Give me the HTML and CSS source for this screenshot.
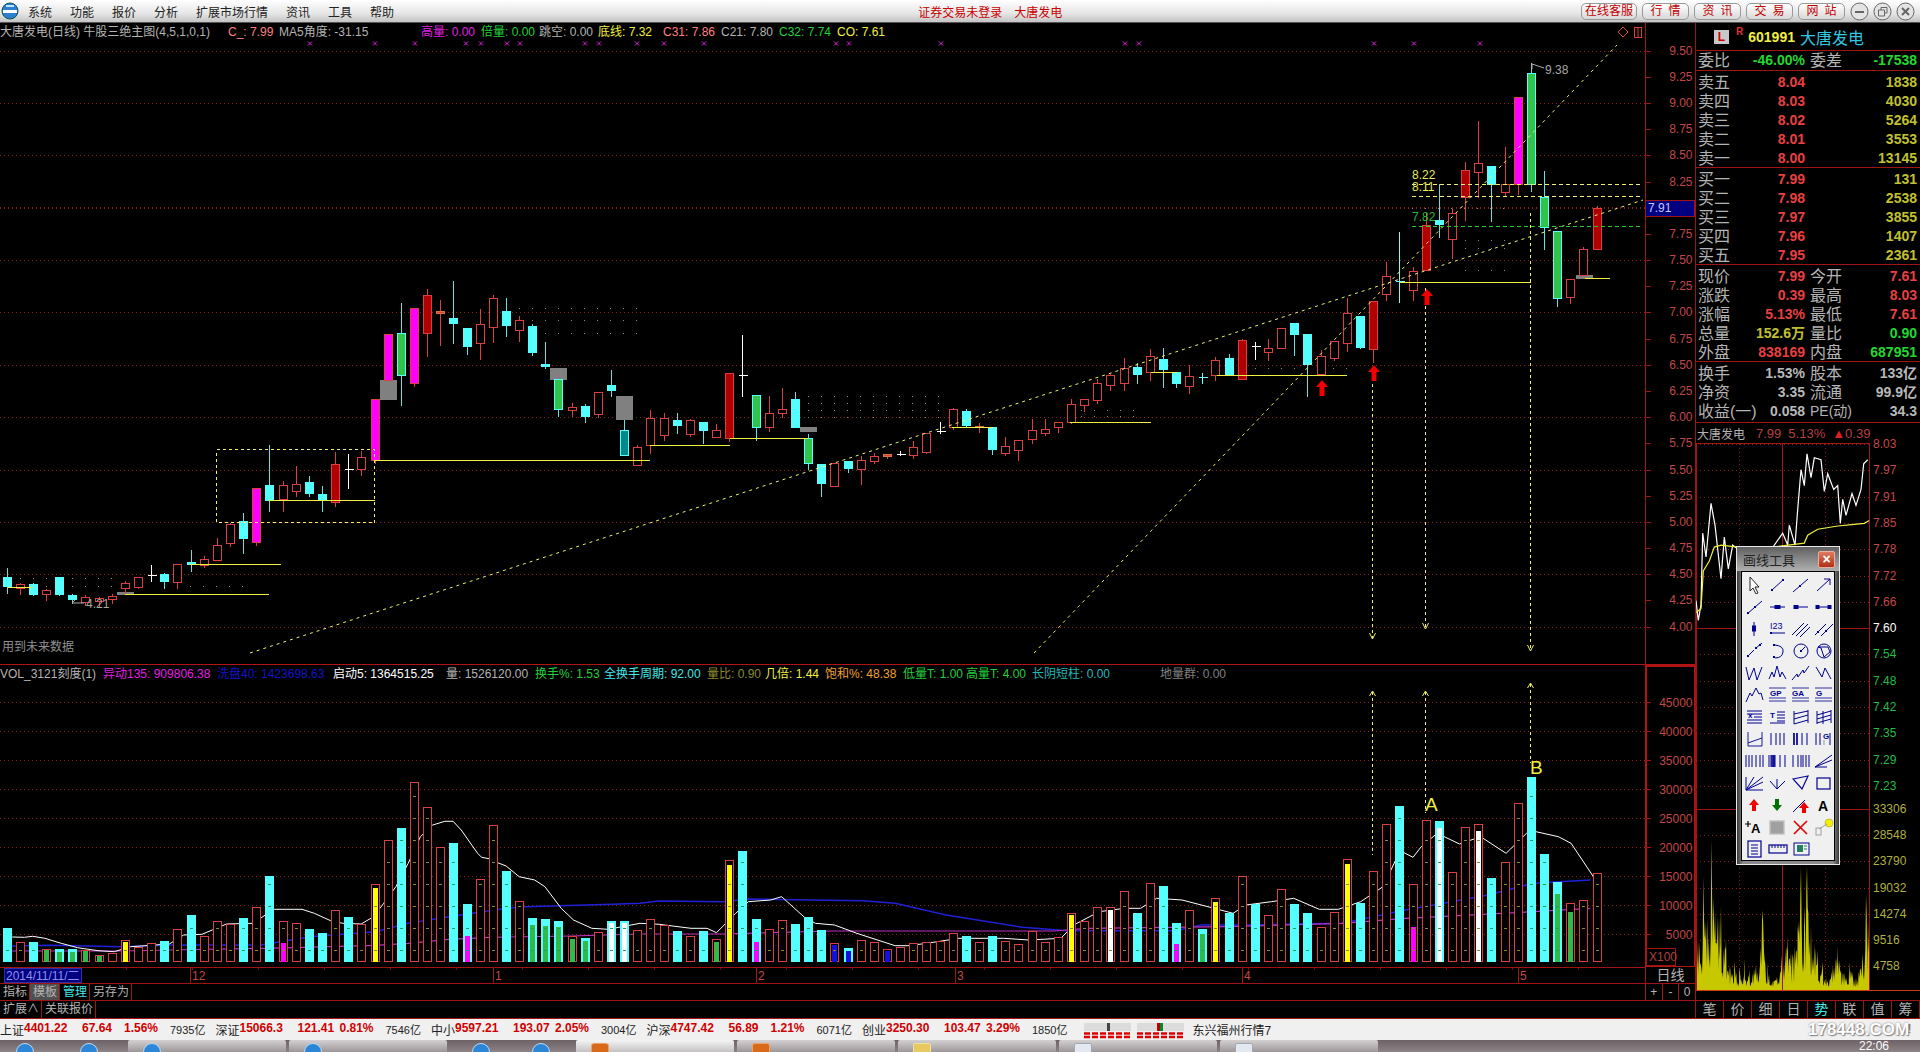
FILE: index.html
```html
<!DOCTYPE html>
<html lang="zh-CN">
<head>
  <meta charset="UTF-8">
  <title>大唐发电 601991</title>
  <link rel="stylesheet" href="styles.css">
</head>
<body>
<div class="app">
  <header class="titlebar">
    <svg class="orb" width="18" height="18" viewBox="0 0 18 18"><circle cx="9" cy="9" r="8" fill="#2f7fd0" stroke="#155" /><path d="M2 8h14v3H2z" fill="#fff"/><path d="M5 4h8" stroke="#bfe3ff" stroke-width="2"/></svg>
    <nav class="menu">
      <span>系统</span><span>功能</span><span>报价</span><span>分析</span><span>扩展市场行情</span><span>资讯</span><span>工具</span><span>帮助</span>
    </nav>
    <div class="login"><span>证券交易未登录</span><span>大唐发电</span></div>
    <div class="pills">
      <span class="pill pill-wide">在线客服</span>
      <span class="pill">行情</span>
      <span class="pill">资讯</span>
      <span class="pill">交易</span>
      <span class="pill">网站</span>
    </div>
    <div class="winbtns">
      <svg width="19" height="19" viewBox="0 0 19 19"><circle cx="9.5" cy="9.5" r="8.5"/><path d="M5 10h9" stroke-width="2"/></svg>
      <svg width="19" height="19" viewBox="0 0 19 19"><circle cx="9.5" cy="9.5" r="8.5"/><path d="M5.5 8h6v6h-6zM8 8V5.5h6V11h-2.500"/></svg>
      <svg width="19" height="19" viewBox="0 0 19 19"><circle cx="9.5" cy="9.5" r="8.5"/><path d="M6 6l7 7M13 6l-7 7" stroke-width="2"/></svg>
    </div>
  </header>

  <div class="workspace">
    <div class="charts">
      <section class="price-pane">
        <div class="legend price-legend">
          <span class="gray">大唐发电(日线) 牛股三绝主图(4,5,1,0,1)</span>
          <span class="pink">C_: 7.99</span>
          <span class="gray">MA5角度: -31.15</span>
          <span class="magenta">高量: 0.00</span>
          <span class="green">倍量: 0.00</span>
          <span class="gray">跳空: 0.00</span>
          <span class="yellow">底线: 7.32</span>
          <span class="pink">C31: 7.86</span>
          <span class="gray">C21: 7.80</span>
          <span class="green">C32: 7.74</span>
          <span class="yellow">CO: 7.61</span>
        </div>
        <div class="future-note">用到未来数据</div>
        <svg id="priceChart" class="chart" width="1695" height="642" viewBox="0 23 1695 642"></svg>
      </section>

      <section class="vol-pane">
        <div class="legend vol-legend">
          <span class="gray">VOL_3121刻度(1)</span>
          <span class="magenta">异动135: 909806.38</span>
          <span class="blue">洗盘40: 1423698.63</span>
          <span class="white">启动5: 1364515.25</span>
          <span class="gray">量: 1526120.00</span>
          <span class="green">换手%: 1.53</span>
          <span class="cyan">全换手周期: 92.00</span>
          <span class="olive">量比: 0.90</span>
          <span class="yellow">几倍: 1.44</span>
          <span class="orange">饱和%: 48.38</span>
          <span class="green">低量T: 1.00</span>
          <span class="green">高量T: 4.00</span>
          <span class="teal">长阴短柱: 0.00</span>
          <span class="dim">地量群: 0.00</span>
        </div>
        <svg id="volChart" class="chart" width="1695" height="302" viewBox="0 665 1695 302"></svg>
      </section>

      <div class="date-row">
        <svg id="dateAxis" width="1645" height="16" viewBox="0 967 1645 16"></svg>
        <div class="period">日线</div>
      </div>
      <div class="tool-row">
        <div class="tabs-left">
          <span>指标</span><span class="on">模板</span><span class="cyan">管理</span><span>另存为</span>
        </div>
        <div class="zoom-btns"><span>+</span><span>-</span><span>0</span></div>
      </div>
      <div class="ext-row">
        <div class="tabs-left">
          <span>扩展∧</span><span>关联报价</span>
        </div>
      </div>
    </div>

    <aside class="side">
      <div class="stock-head">
        <span class="badge-l">L</span><span class="badge-r">R</span>
        <span class="code">601991</span><span class="stock-name">大唐发电</span>
      </div>
      <div class="quote q-ratio">
        <span>委比</span><b class="up-g">-46.00%</b><span class="lbl2">委差</span><b class="up-g">-17538</b>
      </div>
      <div class="quote q-five">
        <span>卖五</span><b class="red">8.04</b><i></i><b class="oli">1838</b>
        <span>卖四</span><b class="red">8.03</b><i></i><b class="oli">4030</b>
        <span>卖三</span><b class="red">8.02</b><i></i><b class="oli">5264</b>
        <span>卖二</span><b class="red">8.01</b><i></i><b class="oli">3553</b>
        <span>卖一</span><b class="red">8.00</b><i></i><b class="oli">13145</b>
      </div>
      <div class="quote q-five">
        <span>买一</span><b class="red">7.99</b><i></i><b class="oli">131</b>
        <span>买二</span><b class="red">7.98</b><i></i><b class="oli">2538</b>
        <span>买三</span><b class="red">7.97</b><i></i><b class="oli">3855</b>
        <span>买四</span><b class="red">7.96</b><i></i><b class="oli">1407</b>
        <span>买五</span><b class="red">7.95</b><i></i><b class="oli">2361</b>
      </div>
      <div class="quote q-five">
        <span>现价</span><b class="red">7.99</b><span class="lbl2">今开</span><b class="red">7.61</b>
        <span>涨跌</span><b class="red">0.39</b><span class="lbl2">最高</span><b class="red">8.03</b>
        <span>涨幅</span><b class="red">5.13%</b><span class="lbl2">最低</span><b class="red">7.61</b>
        <span>总量</span><b class="oli">152.6万</b><span class="lbl2">量比</span><b class="up-g">0.90</b>
        <span>外盘</span><b class="red">838169</b><span class="lbl2">内盘</span><b class="up-g">687951</b>
      </div>
      <div class="quote q-fin">
        <span>换手</span><b class="sil">1.53%</b><span class="lbl2">股本</span><b class="sil">133亿</b>
        <span>净资</span><b class="sil">3.35</b><span class="lbl2">流通</span><b class="sil">99.9亿</b>
        <span>收益(一)</span><b class="sil">0.058</b><span class="lbl2 pe">PE(动)</span><b class="sil">34.3</b>
      </div>
      <div class="mini-head">
        <span class="mini-name">大唐发电</span><span>7.99</span><span>5.13%</span><span><em>▲</em>0.39</span>
      </div>
      <svg id="miniChart" class="chart mini" width="225" height="577" viewBox="1695 423 225 577"></svg>
      <div class="side-tabs">
        <span>笔</span><span>价</span><span>细</span><span>日</span><span class="cyan">势</span><span>联</span><span>值</span><span>筹</span>
      </div>
    </aside>
  </div>

  <footer class="statusbar">
    <div class="market"><span>上证</span><b>4401.22</b><b>67.64</b><b>1.56%</b><span class="amt">7935亿</span></div>
    <div class="market"><span>深证</span><b>15066.3</b><b>121.41</b><b>0.81%</b><span class="amt">7546亿</span></div>
    <div class="market"><span>中小</span><b>9597.21</b><b>193.07</b><b>2.05%</b><span class="amt">3004亿</span></div>
    <div class="market"><span>沪深</span><b>4747.42</b><b>56.89</b><b>1.21%</b><span class="amt">6071亿</span></div>
    <div class="market"><span>创业</span><b>3250.30</b><b>103.47</b><b>3.29%</b><span class="amt">1850亿</span></div>
    <svg class="breadth" width="104" height="18" viewBox="0 0 104 18">
      <path d="M1 2h47v8H1zM54 2h47v8H54z" fill="#dcdcdc"/>
      <path d="M24 2h3v8h-3z" fill="#444"/><path d="M74 2h3v8h-3z" fill="#b00"/><path d="M77 2h3v8h-3z" fill="#083"/>
      <path d="M1 12.500h47M54 12.500h47M1 16h47M54 16h47" stroke="#d00" stroke-width="2.500" stroke-dasharray="6 2"/>
    </svg>
    <span class="news">东兴福州行情7</span>
    <span class="watermark">178448.COM</span>
    <span class="tray-hint">!</span>
  </footer>

  <div class="taskbar">
    <i class="orb-start"></i><i class="tb-ie"></i>
    <span class="tb-btn"><i></i></span>
    <span class="tb-btn"><i></i></span>
    <span class="tb-quick"><i></i><i></i></span>
    <span class="tb-btn tb-lit"><i class="org"></i></span>
    <span class="tb-btn"><i class="org"></i></span>
    <span class="tb-btn"><i class="fold"></i></span>
    <span class="tb-btn"><i class="pale"></i></span>
    <span class="tb-btn"><i class="pale"></i></span>
    <span class="clock">22:06</span>
  </div>

  <div class="draw-tools">
    <div class="draw-title"><span>画线工具</span><b class="draw-close">×</b></div>
    <div id="toolGrid" class="draw-grid"></div>
  </div>
</div>
<script src="chart.js"></script>
</body>
</html>
```

FILE: styles.css
```css
* {
  box-sizing: border-box;
}
html, body {
  margin: 0;
  height: 100%;
  overflow: hidden;
  background: #000;
}
body {
  font-family: "Liberation Sans", "Noto Sans CJK SC", sans-serif;
  font-size: 12px;
  color: #b4b4b4;
}
.app {
  position: relative;
  width: 1920px;
  height: 1052px;
  display: flex;
  flex-direction: column;
  overflow: hidden;
}

/* title bar */
.titlebar {
  height: 23px;
  flex: none;
  display: flex;
  align-items: center;
  background: linear-gradient(#ffffff, #e6e6e6 60%, #c4c4c4);
  border-bottom: 1px solid #555;
  color: #222;
}
.orb {
  margin-left: 1px;
  flex: none;
}
.menu {
  display: flex;
  gap: 18px;
  margin-left: 9px;
}
.login {
  display: flex;
  gap: 12px;
  margin-left: 524px;
  color: #c80000;
}
.pills {
  display: flex;
  gap: 5px;
  margin-left: auto;
}
.pill {
  width: 47px;
  height: 17px;
  line-height: 15px;
  text-align: center;
  letter-spacing: 6px;
  padding-left: 6px;
  color: #c00000;
  border: 1px solid #999;
  border-radius: 5px;
  background: linear-gradient(#fff, #d8d8d8);
}
.pill-wide {
  width: 56px;
  letter-spacing: 0;
  padding-left: 0;
}
.winbtns {
  display: flex;
  gap: 4px;
  margin: 0 5px 0 5px;
}
.winbtns svg {
  fill: none;
  stroke: #666;
}
.winbtns circle {
  fill: #e4e4e4;
}

/* main layout */
.workspace {
  flex: 1;
  display: flex;
  min-height: 0;
}
.charts {
  width: 1695px;
  flex: none;
  display: flex;
  flex-direction: column;
}
.side {
  flex: 1;
  display: flex;
  flex-direction: column;
  border-left: 1px solid #a01414;
}
.price-pane, .vol-pane {
  position: relative;
  flex: none;
}
.price-pane {
  height: 642px;
}
.vol-pane {
  height: 302px;
}
.chart {
  display: block;
}
.chart text {
  font-family: "Liberation Sans", "Noto Sans CJK SC", sans-serif;
  font-size: 12px;
}
.legend {
  position: absolute;
  left: 0;
  top: 1px;
  display: grid;
  white-space: nowrap;
  line-height: 17px;
}
.price-legend {
  grid-template-columns: 228px 51px 142px 60px 58px 59px 65px 58px 58px 58px auto;
}
.vol-legend {
  grid-template-columns: 103px 114px 116px 113px 89px 69px 103px 58px 60px 78px 63px 66px 128px auto;
}
.gray { color: #b4b4b4; }
.dim { color: #808080; }
.white { color: #fff; }
.pink { color: #ff8080; }
.magenta { color: #e020e0; }
.green { color: #22d03c; }
.yellow { color: #f0f040; }
.olive { color: #8c8c30; }
.orange { color: #f0a030; }
.cyan { color: #40e8e8; }
.teal { color: #20b8b8; }
.blue { color: #1414c8; }
.future-note {
  position: absolute;
  left: 2px;
  top: 614px;
  color: #909090;
}

/* rows under the charts */
.date-row {
  height: 16px;
  flex: none;
  display: flex;
  border-top: 0;
}
.period {
  width: 50px;
  text-align: center;
  font-size: 14px;
  line-height: 16px;
  border-left: 1px solid #a01414;
}
.tool-row, .ext-row {
  flex: none;
  display: flex;
  justify-content: space-between;
  border-top: 1px solid #a01414;
}
.tool-row {
  height: 17px;
}
.ext-row {
  height: 19px;
  border-bottom: 1px solid #a01414;
}
.tabs-left {
  display: flex;
  line-height: 16px;
}
.tabs-left span {
  padding: 0 2px 0 3px;
  border-right: 1px solid #a01414;
}
.tabs-left .on {
  background: #505050;
}
.zoom-btns {
  width: 50px;
  display: flex;
  border-left: 1px solid #a01414;
}
.zoom-btns span {
  flex: 1;
  text-align: center;
  line-height: 16px;
  border-right: 1px solid #a01414;
}
.zoom-btns span:last-child {
  border-right: 0;
}

/* quote panel */
.stock-head {
  height: 28px;
  flex: none;
  display: flex;
  align-items: center;
  border-bottom: 1px solid #a01414;
  padding-left: 18px;
}
.badge-l {
  width: 15px;
  height: 14px;
  line-height: 14px;
  text-align: center;
  font-weight: bold;
  color: #d00000;
  background: #c8c8c8;
}
.badge-r {
  margin: -10px 0 0 7px;
  font-size: 10px;
  font-weight: bold;
  color: #e03030;
}
.code {
  margin-left: 5px;
  font-size: 14px;
  font-weight: bold;
  color: #f0f040;
}
.stock-name {
  margin-left: 5px;
  font-size: 16px;
  color: #30c8e0;
}
.quote {
  flex: none;
  display: grid;
  grid-template-columns: 45px 62px 45px 67px;
  grid-auto-rows: 19px;
  padding-left: 2px;
  border-bottom: 1px solid #a01414;
  align-items: center;
  font-size: 16px;
  white-space: nowrap;
}
.quote b, .quote span {
  line-height: 19px;
}
.quote b {
  font-size: 14px;
  text-align: right;
}
.quote i {
  display: block;
}
.q-ratio {
  height: 20px;
}
.q-five {
  height: 97px;
  padding-top: 2px;
}
.q-fin {
  height: 61px;
  padding-top: 2px;
}
.lbl2 {
  padding-left: 5px;
}
.pe {
  font-size: 14px;
}
.red { color: #e84040; }
.oli { color: #c0c030; }
.up-g { color: #20d830; }
.sil { color: #b8b8b8; }
.mini-head {
  position: relative;
  z-index: 1;
  height: 20px;
  margin-bottom: -20px;
  flex: none;
  display: flex;
  align-items: center;
  gap: 7px;
  color: #b84040;
  font-size: 13px;
  padding-left: 1px;
}
.mini-name {
  color: #b4b4b4;
  font-size: 12px;
  margin-right: 4px;
}
.mini-head em {
  font-style: normal;
  color: #e02020;
}
.mini {
  flex: none;
}
.side-tabs {
  height: 19px;
  flex: none;
  display: flex;
  border-top: 1px solid #a01414;
  border-bottom: 1px solid #a01414;
}
.side-tabs span {
  width: 28px;
  text-align: center;
  font-size: 14px;
  line-height: 17px;
  border-right: 1px solid #a01414;
}

/* status + taskbar */
.statusbar {
  position: relative;
  height: 21px;
  flex: none;
  display: flex;
  align-items: center;
  background: #f0f0f0;
  color: #222;
}
.market {
  width: 215.500px;
  flex: none;
  display: grid;
  grid-template-columns: 24px 58px 42px 46px 1fr;
}
.market b {
  color: #d00000;
}
.amt {
  font-size: 11px;
}
.breadth {
  margin-left: 5px;
  flex: none;
}
.news {
  margin-left: 6px;
}
.watermark {
  position: absolute;
  left: 1808px;
  top: 0;
  font-size: 17px;
  line-height: 21px;
  font-weight: bold;
  color: #fff;
  text-shadow: 0 0 2px #777, 1px 1px 1px #888;
}
.tray-hint {
  position: absolute;
  left: 1908px;
  top: 3px;
  color: #666;
}
.taskbar {
  height: 12px;
  flex: none;
  display: flex;
  align-items: flex-start;
  overflow: hidden;
  background: linear-gradient(#6d6366, #8d8285);
}
.taskbar i {
  display: block;
  flex: none;
  width: 18px;
  height: 18px;
  border-radius: 50%;
  background: #2c86d8;
  border: 1px solid #bcdcf4;
}
.orb-start {
  margin: 3px 0 0 16px;
}
.taskbar .tb-ie {
  margin: 3px 30px 0 46px;
}
.tb-btn {
  width: 158px;
  height: 12px;
  flex: none;
  margin-right: 3px;
  padding: 3px 0 0 15px;
  background: linear-gradient(#d4d0d2, #9d9698);
  border-radius: 2px 2px 0 0;
}
.tb-lit {
  background: linear-gradient(#f4f4f4, #c4c2c2);
}
.tb-quick {
  width: 126px;
  flex: none;
  display: flex;
  gap: 42px;
  padding: 3px 0 0 22px;
}
.taskbar .org { background: #d86a1a; border-color: #f0a060; border-radius: 3px; }
.taskbar .fold { background: #e8c860; border-color: #f0e0a0; border-radius: 2px; }
.taskbar .pale { background: #e4e8f0; border-color: #a0a8b8; border-radius: 2px; }
.clock {
  margin-left: 478px;
  color: #fff;
  line-height: 13px;
}

/* floating draw tool window */
.draw-tools {
  position: absolute;
  left: 1736px;
  top: 546px;
  width: 104px;
  height: 319px;
  padding: 0 4px 4px;
  border: 1px solid #e8e8e8;
  background: linear-gradient(90deg, #3a3a3a, #8a8a8a 6%, #8a8a8a 94%, #3a3a3a);
}
.draw-title {
  height: 24px;
  display: flex;
  align-items: center;
  justify-content: space-between;
  color: #222;
  font-size: 13px;
  background: linear-gradient(#606060, #b0b0b0);
  margin: 0 -4px;
  padding: 0 4px 0 6px;
}
.draw-close {
  width: 17px;
  height: 17px;
  line-height: 15px;
  text-align: center;
  color: #fff;
  font-size: 14px;
  border-radius: 2px;
  border: 1px solid #e8b0a0;
  background: linear-gradient(#e07860, #b03018);
}
.draw-grid {
  height: 290px;
  display: grid;
  grid-template-columns: repeat(4, 23px);
  grid-auto-rows: 22px;
  padding: 2px 0 0 1px;
  background: #f0f0f0;
  border: 1px solid #000;
}
.draw-grid svg {
  display: block;
  margin: 2px 0 0 1px;
  fill: none;
  stroke: #000090;
}
.draw-grid text {
  font-family: "Liberation Sans", sans-serif;
  font-weight: bold;
  font-size: 8px;
  fill: #000090;
  stroke: none;
}
```

FILE: chart.js
```js
// coordinates are page pixels, the svg viewBoxes line up with the page
const RED = '#d94040', LINE = '#a01414', CYAN = '#55ffff', DASH = '#f0f070';
const X = i => Math.round(6.6 + 13.14 * i) + 0.5;
const Z = v => Math.round(270 + v / 3) + 0.5;   // first crop scale
const Z2 = v => Math.round(40 + v / 3) + 0.5;   // right end of the chart

const line = (x1, y1, x2, y2, c, extra = '') =>
  `<line x1="${x1}" y1="${y1}" x2="${x2}" y2="${y2}" stroke="${c}" ${extra}/>`;
const crisp = 'shape-rendering="crispEdges"';
const box = (x, y, w, h, fill, stroke) =>
  `<rect x="${x}" y="${y}" width="${w}" height="${h}" fill="${fill}" ${stroke ? `stroke="${stroke}"` : ''} ${crisp}/>`;
const text = (x, y, s, c, extra = '') =>
  `<text x="${x}" y="${y}" fill="${c}" ${extra}>${s}</text>`;
const poly = (pts, c, w = 1) =>
  `<polyline points="${pts.map(p => p.join(',')).join(' ')}" fill="none" stroke="${c}" stroke-width="${w}"/>`;

// type, high, body top, body bottom, low
const candles = [
  ['c',890,921,948,968],['r',935,943,953,972],['c',935,943,972,975],['r',955,961,971,990],['c',918,921,972,975],
  ['c',970,975,987,1000],['r',972,982,996,1005],['r',978,985,993,1010],['r',970,977,986,998],['r',930,940,953,970],
  ['r',918,922,950,953],['x',882,916,932],['c',905,912,933,953],['r',883,883,935,953],['c',838,877,882,903],
  ['r',855,868,886,892],['r',800,826,869,869],['r',755,763,820,828],['c',726,754,804,850],['m',655,655,815,825],
  ['c',522,645,690,722],['r',630,646,686,723],['r',585,643,662,678],['c',615,636,668,678],['c',645,672,687,722],
  ['d',543,583,695,708],['x',550,598,655],['r',540,562,598,615],['m',388,388,570,578],['m',193,193,330,330],
  ['g',97,190,316,405],['m',115,115,338,348],['d',55,75,190,258],['o',88,124,128,225],['c',30,145,158,218],
  ['c',175,175,228,252],['r',115,163,220,266],['r',72,85,170,215],['c',82,124,164,197],['r',135,151,179,212],
  ['c',160,168,245,255],['c',213,282,288,293],['g',326,326,418,438],['r',396,411,419,438],['c',400,407,438,456],
  ['r',367,367,431,441],['c',298,345,359,378],['t',448,480,556,556],['r',523,532,584,584],['r',418,445,526,548],
  ['r',426,445,494,510],['c',425,450,465,488],['r',445,451,491,498],['c',456,456,480,518],['r',460,481,500,500],
  ['d',310,310,505,512],['x',192,316,378],['g',376,376,470,510],['r',375,430,470,484],['r',350,418,428,440],
  ['c',362,388,470,470],
  ['g',488,505,578,597],['c',583,583,638,678],['r',580,580,647,647],['c',570,573,594,605],['r',555,571,597,642],
  ['r',545,559,572,578],['o',552,552,557,563],['x',541,552,555],['r',510,532,554,563],['r',488,490,546,548],
  ['x',453,483,490],['r',410,418,472,478],['c',413,423,465,470],['o',455,468,472,487],['c',472,472,537,552],
  ['r',498,529,548,555],['r',510,510,539,570],['r',445,481,506,518],['r',445,477,489,495],['r',452,457,470,486],
  ['r',385,403,457,460],['r',383,388,404,423],['r',325,340,389,398],['r',310,315,344,360],['r',262,295,338,360],
  ['c',277,291,311,338],['r',235,259,307,330],['c',230,267,296,350],['c',306,306,339,350],['r',283,319,347,370],
  ['y',307,322,340],['r',258,271,316,330],['c',250,264,316,316],['d',205,210,328,328],['x',212,227,268],
  ['r',205,235,245,270],['r',173,175,233,233],['c',159,159,192,255],['c',192,192,282,378],['r',238,257,311,315],
  ['r',210,214,263,270],['r',80,130,220,243],['c',135,138,230,233],['d',93,93,236,275]
];
const candlesEnd = [
  ['r',663,709,761,780],['y',573,722,786],['r',678,694,749,780],['d',516,556,691,691],['c',430,540,552,590],
  ['r',505,520,596,653],['d',363,391,472,540],['r',240,370,395,470],['c',378,378,433,543],['r',318,431,455,468],
  ['m',172,172,431,462],['g',65,100,433,452],['g',390,471,562,627],['g',574,574,775,797],['r',718,718,770,788],
  ['r',618,628,705,705],['d',495,505,626,626]
];

const styles = {
  r: ['#000', RED, RED], d: ['#b00000', RED, RED], c: [CYAN, CYAN, '#66e0e0'],
  m: ['#ff00ff', RED, RED], g: ['#33c24a', CYAN, '#66e0e0'], t: ['#008a8a', CYAN, '#66e0e0'],
  o: ['#d94040', '#e0703c', RED]
};

function candle(c, i, conv) {
  const x = X(i);
  if (c[0] === 'x' || c[0] === 'y') {
    const col = c[0] === 'x' ? '#fff' : '#7ff';
    return line(x, conv(c[1]), x, conv(c[3]), col, crisp) + line(x - 4, conv(c[2]), x + 5, conv(c[2]), col, crisp);
  }
  const s = styles[c[0]];
  const t = conv(c[2]), b = conv(c[3]);
  return line(x, conv(c[1]), x, conv(c[4]), s[2], crisp) + box(x - 4, t, 8, b - t, s[0], s[1]);
}

function drawPrice() {
  let o = '';
  // dotted grid every 0.50
  for (let p = 9.5; p >= 4; p -= 0.5) {
    const y = Math.round(50.7 + (9.5 - p) * 104.7) + 0.5;
    o += line(0, y, 1645, y, '#8a2020', `stroke-dasharray="1 3" ${crisp}`);
  }
  o += line(0, 207.5, 1645, 207.5, '#8a2020', `stroke-dasharray="1 3" ${crisp}`);

  // marker row
  [310,375,415,466,481,507,520,585,599,637,664,704,836,849,941,1125,1139,1374,1414,1480].forEach(x => {
    o += `<path d="M${x - 2} 41.500l4 4M${x + 2} 41.500l-4 4" stroke="#e020e0" fill="none"/>`;
  });

  // little dot fields
  const dots = [
    [519,638,308],[519,638,320],[519,638,333],[20,112,578],[20,112,586],[190,245,586],
    [808,940,396],[808,940,403],[808,940,410],[808,940,417],[1068,1137,410],[1068,1137,416],
    [1465,1507,240],[1465,1507,248],[1465,1507,270],[1412,1505,208],[1255,1347,368],[1373,1373,347]
  ];
  dots.forEach(d => {
    for (let x = d[0]; x <= d[1]; x += 13) o += box(x, d[2], 1, 1, '#908f80');
  });

  // gray blocks
  [[117,592,17,3],[380,380,17,20],[550,368,17,12],[616,396,17,24],[800,427,17,5],[1576,275,17,4]].forEach(b => {
    o += box(b[0], b[1], b[2], b[3], '#808080');
  });

  candles.forEach((c, i) => { o += candle(c, i, Z); });
  candlesEnd.forEach((c, i) => { o += candle(c, i + 105, Z2); });

  // yellow support lines
  [[8,33,587],[125,269,594],[190,281,564],[269,375,500],[375,650,460],[650,730,445],[730,808,438],
   [952,993,427],[1070,1151,422],[1151,1177,372],[1217,1347,375],[1400,1531,282],[1585,1610,278]].forEach(l => {
    o += line(l[0], l[2] + 0.5, l[1], l[2] + 0.5, '#f0f040', crisp);
  });

  // dashed box and trend lines
  o += `<rect x="216.500" y="449.500" width="158" height="73" fill="none" stroke="${DASH}" stroke-dasharray="3 3" ${crisp}/>`;
  o += line(250, 653, 1643, 200, DASH, 'stroke-dasharray="3 4"');
  o += line(1034, 653, 1617, 45, DASH, 'stroke-dasharray="3 4"');

  // level lines with their labels
  [[184.5,DASH],[196.5,DASH],[226.5,'#22cc22']].forEach(l => {
    o += line(1412, l[0], 1643, l[0], l[1], `stroke-dasharray="4 3" ${crisp}`);
  });
  o += text(1412, 179, '8.22', '#e8e860') + text(1412, 191, '8.11', '#e8e860') + text(1412, 221, '7.82', '#22bb33');

  // the three drop lines
  [[1372.5,378,638],[1425.5,288,628],[1530.5,213,650]].forEach(l => {
    o += line(l[0], l[1], l[0], l[2], DASH, `stroke-dasharray="3 3" ${crisp}`);
    o += `<path d="M${l[0] - 3} ${l[2] - 5}l3 6 3-6" fill="none" stroke="${DASH}"/>`;
  });

  // buy arrows
  [[1374,365],[1322,380],[1427,289]].forEach(a => {
    o += `<path d="M${a[0]} ${a[1]}l6 7h-3.500v9h-5v-9h-3.500z" fill="#f00000"/>`;
  });

  // hi and low notes
  o += `<path d="M1532 64v5M1532 64l12 4" fill="none" stroke="#a8a8a8"/>` + text(1545, 74, '9.38', '#a8a8a8');
  o += `<path d="M84 603H72l3-3" fill="none" stroke="#a8a8a8"/>` + text(86, 608, '4.21', '#a8a8a8');

  // top right corner marks
  o += `<path d="M1623 27l5 5-5 5-5-5z" fill="none" stroke="${RED}"/>` + box(1634.5, 27.5, 7, 10, 'none', RED) + line(1638, 28, 1638, 37, RED);

  // axis
  o += line(1645, 23, 1645, 665, LINE, crisp);
  for (let p = 9.5; p >= 3.99; p -= 0.25) {
    const y = 50.7 + (9.5 - p) * 104.7;
    const r = Math.round(y) + 0.5;
    o += line(1645, r, 1651, r, LINE, crisp);
    if (Math.abs(p - 8) > 0.01) o += text(1692.5, y + 4, p.toFixed(2), '#c04848', 'text-anchor="end"');
  }
  o += box(1645.5, 200.5, 49, 16, '#000080', '#a01414') + text(1648, 212, '7.91', '#c8c8ff');
  o += line(0, 665, 1695, 665, '#b01414', 'stroke-width="2"');
  document.getElementById('priceChart').innerHTML = o;
}

// top + kind [+ inner colour + inner top], read off the volume pane
const vols = ('804c 845r 847c 866rg870 868cg875 868cg875 870rg874 885rg889 880r 841ry845 862r 850r 843c 808r 765c 829r ' +
  '784r 793r 774c 742r 648c 784rm850 790r 807c 819c 751r 771c 792r 673ry685 541r 504c 367r 442r 561r 549c 732cm828 658r ' +
  '496r 633c 724r 774cg795 777cg798 783cg800 827rg838 834cg843 817r 783cw790 783cw790 810r ' +
  '778r 796r 813c 829r 813c 838rg847 601ry615 573c 777cm846 808r 781r 792c 771c 810c 848rb855 865cb872 841r 846r 867rb872 ' +
  '861r 850r 846r 843r 820r 828c 846r 828c 843r 852r 813r 846r 832r 760ry765 783r 741r 741rw750 693r 759c 670r 678c 789cm852 ' +
  '751r 808cg822 715ry726 759c 649r 732c 766r 687r 732c 759c 802r 757r 598ry612 730c 633r 492r 438c 673rm801 481r 484cw505 ' +
  '637r 502r 493rw514 654c 607r 430r 351c 582c 666cg702 730rg756 721r 640r').split(' ');
const inner = { g: '#33b84a', y: '#ffff00', m: '#ff00ff', w: '#ffffff', b: '#1010e0' };

function drawVol() {
  const VY = v => 660 + v / 3;
  const BASE = 961.5;
  let o = '';
  for (let y = 701.5; y < 950; y += 29.05) {
    const r = Math.round(y) + 0.5;
    o += line(0, r, 1645, r, '#8a2020', `stroke-dasharray="1 3" ${crisp}`);
  }

  // the lines run behind the bars, they only show in the gaps
  const ZA = (u, v) => [+(u / 2.45).toFixed(1), +VY(v).toFixed(1)];
  const ZB = (u, v) => [+(640 + u / 1.568).toFixed(1), +VY(v).toFixed(1)];
  const blue = [[30,858],[120,856],[300,860],[420,855],[640,855],[760,830],[920,815],[1000,790],[1100,770],[1240,745],[1290,740],[1500,733]].map(p => ZA(...p))
    .concat([[0,730],[30,723],[130,725],[170,717],[350,722],[400,730],[480,765],[600,802],[670,812],[840,812],[880,795],[950,795],[1100,790],[1150,770],[1200,750],[1260,730],[1330,705],[1400,670],[1490,660]].map(p => ZB(...p)));
  const magenta = [[30,873],[300,873],[420,870],[650,865],[920,856],[1000,850],[1100,838],[1200,832],[1400,828]].map(p => ZA(...p))
    .concat([[0,822],[130,822],[300,813],[650,813],[700,805],[920,800],[1100,790],[1200,775],[1400,755],[1490,745]].map(p => ZB(...p)));
  const white = [[30,831],[60,832],[80,829],[110,835],[150,850],[190,863],[240,872],[280,875],[320,860],[370,856],[415,852],[450,825],[495,823],[520,810],[555,792],[620,790],[650,765],[672,748],[740,748],[770,760],[810,782],[840,790],[885,792],[915,770],[940,730],[970,680],[1000,610],[1030,530],[1060,495],[1090,484],[1110,484],[1130,510],[1170,580],[1180,592],[1198,596],[1215,606],[1240,618],[1272,650],[1310,660],[1335,680],[1375,745],[1405,780],[1450,805],[1490,808]].map(p => ZA(...p))
    .concat([[0,790],[30,793],[80,805],[105,805],[120,818],[150,760],[170,725],[205,720],[222,710],[258,772],[275,790],[305,795],[340,820],[400,857],[420,857],[450,850],[500,835],[570,835],[610,840],[660,835],[680,795],[720,755],[760,745],[785,745],[810,715],[850,720],[900,745],[930,760],[950,735],[990,725],[1025,715],[1065,748],[1095,748],[1130,725],[1165,680],[1185,600],[1195,575],[1212,592],[1225,560],[1250,520],[1285,552],[1318,530],[1358,580],[1390,520],[1405,515],[1440,530],[1460,550],[1495,650]].map(p => ZB(...p)));
  o += poly(blue, '#2020d8', 1.5) + poly(magenta, '#c030c0', 1.2) + poly(white, '#fff', 1);

  vols.forEach((s, i) => {
    const m = s.match(/^(\d+)([rc])(?:([gymwb])(\d+))?$/);
    const x = X(i), top = Math.round(VY(+m[1])) + 0.5;
    if (m[2] === 'r') o += box(x - 4, top, 8, BASE - top, '#000', RED);
    else o += box(x - 4.5, top - 0.5, 9, BASE - top + 1, CYAN);
    if (m[3]) {
      const it = Math.round(VY(+m[4]));
      o += box(x - 2.5, it, 5, BASE - it, inner[m[3]]);
    }
    const tick = m[2] === 'r' ? '#8a8a30' : '#2a9a5a';
    for (let y = 950; y > top + 4; y -= 22) o += box(x - 1.5, Math.round(y), 3, 1, tick);
  });

  // rising dashed lines with small heads
  [[1372.5,692,855],[1425.5,692,813],[1530.5,684,763]].forEach(l => {
    o += line(l[0], l[1], l[0], l[2], DASH, `stroke-dasharray="3 3" ${crisp}`);
    o += `<path d="M${l[0] - 3} ${l[1] + 4}l3-5 3 5" fill="none" stroke="${DASH}"/>`;
  });
  o += text(1425, 811, 'A', '#f0f040', 'style="font-size:19px"') + text(1530, 774, 'B', '#f0f040', 'style="font-size:19px"');

  // volume axis
  o += `<rect x="1645.500" y="666" width="49" height="300.500" fill="none" stroke="#b01414" stroke-width="2" ${crisp}/>`;
  [45000,40000,35000,30000,25000,20000,15000,10000,5000].forEach((v, i) => {
    const y = Math.round(701.5 + i * 29.05) + 0.5;
    o += line(1645, y, 1651, y, LINE, crisp) + text(1692.5, y + 4, v, '#c04848', 'text-anchor="end"');
  });
  o += box(1646.5, 948.5, 29, 17, 'none', '#a01414') + text(1649, 961, 'X100', '#b04040');
  document.getElementById('volChart').innerHTML = o;
}

function drawMini() {
  const MX = u => +(1640 + u / 3).toFixed(1);
  const MY = v => +(430 + v / 2.52).toFixed(1);
  const dot = `stroke-dasharray="1 3" ${crisp}`;
  let o = '';
  const labels = ['8.03','7.97','7.91','7.85','7.78','7.72','7.66','7.60','7.54','7.48','7.42','7.35','7.29','7.23'];
  const vlabels = ['33306','28548','23790','19032','14274','9516','4758'];
  labels.forEach((s, i) => {
    const y = 444 + i * 26.3, r = Math.round(y) + 0.5;
    o += line(1695, r, 1868, r, i === 7 ? LINE : '#8a2020', i === 7 ? crisp : dot);
    o += text(1872, y + 4, s, i < 7 ? '#c04848' : i === 7 ? '#fff' : '#22bb44');
  });
  vlabels.forEach((s, i) => {
    const y = 809 + i * 26.2, r = Math.round(y) + 0.5;
    o += line(1695, r, 1868, r, i === 0 ? LINE : '#8a2020', i === 0 ? crisp : dot);
    o += text(1872, y + 4, s, '#b0b040');
  });
  [1738.5, 1824.5].forEach(x => { o += line(x, 444, x, 990, '#8a2020', dot); });

  // volume spikes, column by column between the read off peaks
  const peaks = [[165,1245],[175,1290],[187,1125],[195,1240],[211,1030],[222,1210],[240,1200],[255,1280],[265,1350],[280,1340],[295,1355],[310,1330],[325,1360],[345,1350],[365,1210],[380,1340],[400,1390],[425,1290],[440,1275],[455,1320],[470,1250],[480,1100],[490,1200],[498,1100],[510,1250],[530,1310],[545,1340],[560,1390],[575,1350],[590,1300],[605,1370],[625,1340],[645,1380],[665,1320],[675,1170],[685,1250]];
  const floor = 990;
  const spikes = [[1695, floor]];
  for (let k = 0; k < peaks.length - 1; k++) {
    const a = peaks[k], b = peaks[k + 1];
    for (let u = a[0]; u < b[0]; u += 2) {
      const t = (u - a[0]) / (b[0] - a[0]);
      const top = MY(a[1] + (b[1] - a[1]) * t);
      const wave = t === 0 ? 1 : 0.15 + 0.8 * Math.abs(Math.sin(u * 1.7) * Math.cos(u * 0.9));
      spikes.push([MX(u), +(floor - (floor - top) * wave).toFixed(1)]);
    }
  }
  spikes.push([MX(685), MY(1250)], [MX(685), floor]);
  o += `<polygon points="${spikes.map(p => p.join(',')).join(' ')}" fill="#c8c800"/>`;

  o += line(1781.5, 444, 1781.5, 990, LINE, crisp);
  o += box(1695.5, 443.5, 173, 546.5, 'none', LINE);
  o += line(1695, 990.5, 1920, 990.5, '#c83c14', crisp);

  const w = [[165,430],[172,480],[180,440],[185,260],[195,320],[210,185],[222,240],[240,375],[250,270],[262,350],[275,290],[290,300],[350,350],[425,260],[440,290],[445,240],[462,290],[470,200],[480,100],[490,140],[498,60],[510,120],[520,70],[540,75],[550,155],[560,110],[578,150],[590,140],[598,235],[605,175],[615,215],[633,160],[645,190],[660,150],[668,85],[680,75]];
  const a = [[165,460],[180,450],[187,355],[205,330],[220,295],[240,290],[290,295],[350,300],[490,285],[500,265],[530,250],[590,242],[640,238],[670,235],[685,228]];
  o += poly(w.map(p => [MX(p[0]), MY(p[1])]), '#fff', 1.2) + poly(a.map(p => [MX(p[0]), MY(p[1])]), '#f0f040', 1.2);
  document.getElementById('miniChart').innerHTML = o;
}

function drawDates() {
  let o = box(4.5, 968.5, 77, 14, '#000080', '#3030a0') + text(6, 980, '2014/11/11/二', '#9090f0');
  [[190,'12'],[493,'1'],[756,'2'],[955,'3'],[1242,'4'],[1518,'5']].forEach(m => {
    o += line(m[0] + 0.5, 967, m[0] + 0.5, 983, LINE, crisp) + text(m[0] + 2, 980, m[1], '#c04848');
  });
  for (let x = 60; x < 1640; x += 66) o += line(x + 0.5, 967, x + 0.5, 970, '#701010', crisp);
  o += line(0, 967, 1645, 967, LINE, crisp);
  document.getElementById('dateAxis').innerHTML = o;
}

function drawTools() {
  const p = (d, extra = '') => `<path d="${d}" ${extra}/>`;
  const dots = (...pts) => pts.map(q => `<rect x="${q[0] - 1}" y="${q[1] - 1}" width="2" height="2" fill="#000090" stroke="none"/>`).join('');
  const t = (s, x, y, extra = '') => `<text x="${x}" y="${y}" ${extra}>${s}</text>`;
  const bars = (...xs) => xs.map(x => p(`M${x} 3v12`)).join('');
  const rows = (...ys) => ys.map(y => p(`M3 ${y}h15`)).join('');
  const icons = [
    p('M6 1v14l3-3 3 6 2-1-3-6h4z', 'stroke="#222" fill="#fff"'),
    p('M5 14 16 4') + dots([5, 14], [16, 4]),
    p('M3 16 18 3') + dots([10, 10]),
    p('M4 15 17 3M11 3h6v6'),
    p('M3 16 18 3') + dots([4, 15], [11, 9]),
    p('M3 9h15') + `<rect x="8" y="7.500" width="5" height="3" fill="#000090"/>`,
    p('M5 9h13') + `<rect x="4" y="7.500" width="4" height="3" fill="#000090"/>`,
    p('M4 9h13') + `<rect x="3" y="7.500" width="3" height="3" fill="#000090"/><rect x="15" y="7.500" width="3" height="3" fill="#000090"/>`,
    p('M10 2v14') + `<rect x="8.500" y="6" width="3" height="5" fill="#000090"/>`,
    t('I23', 3, 9, 'style="font-weight:normal;font-size:9px"') + p('M3 13h15') + dots([4, 13]),
    p('M2 15 14 3M6 16 18 4M10 17 20 7'),
    p('M2 15 13 4M8 16 20 4') + dots([5, 12], [13, 11]),
    p('M3 15 10 8M12 6l6-5') + dots([4, 14], [12, 6], [16, 3]),
    p('M8 3q9 1 8 7t-8 6') + dots([7, 3], [7, 15]),
    `<circle cx="11" cy="9" r="7"/>` + p('M11 9l4-4') + dots([11, 9]),
    `<circle cx="11" cy="9" r="7"/>` + p('M5 5h10l2 5-6 5-3-9z'),
    p('M2 3l3 13 5-12 3 12 5-13'),
    p('M2 15l3-7 2 5 3-11 3 11 2-5 4 7'),
    p('M2 16l5-6 1 3 5-7 1 3 5-7'),
    p('M3 3l6 10 3-9 6 11'),
    p('M2 16l4-9 2 3 4-8 3 6 2-1 2 7'),
    t('GP', 3, 10) + p('M2 2h17M2 12h17M2 15h17', 'stroke-width=".8"'),
    t('GA', 2, 10) + p('M2 2h17M2 12h17M2 15h17', 'stroke-width=".8"'),
    t('G', 3, 10) + p('M2 2h17M2 12h17M2 15h17', 'stroke-width=".8"'),
    t('x', 4, 10) + rows(3, 6, 12, 15) + p('M10 9h8'),
    t('T', 3, 10) + p('M10 4h8M10 7h8M10 10h8M10 13h8') + p('M3 15h15'),
    p('M4 3v13M18 2v13M4 6l14-3M4 11l14-4M4 16l14-4'),
    p('M4 3v13M10 3v13M18 2v13M4 7l14-4M4 11l14-4M4 15l14-4'),
    p('M4 2v14M18 2v14M4 13l14-5M4 16h14', 'stroke-width=".9"'),
    bars(4, 9, 13, 17),
    bars(4, 7, 12, 17) + p('M4 3v12M7 3v12', 'stroke-width="1.4"'),
    bars(3, 7, 17) + t('G', 10, 9) + p('M11 10v5', 'stroke="#999"'),
    bars(2, 5, 8, 12, 16, 19),
    bars(2, 4, 6, 7, 8, 13, 18) + p('M5 3v12M7 3v12', 'stroke-width="1.4"'),
    bars(3, 8, 11, 13, 16, 19),
    p('M2 15 19 3M2 15 19 8M2 15h12'),
    p('M2 3v13h17M2 16 19 3M2 16 19 8M2 16 10 3'),
    p('M10 15V5M3 7l7 8 8-8'),
    p('M3 5l15-3-6 13z', 'stroke-width="1.2"'),
    `<rect x="4" y="4" width="13" height="11" stroke-width="1.2"/>`,
    p('M10 3l5 6h-3v6H8V9H5z', 'fill="#f00000" stroke="none"'),
    p('M10 15l5-6h-3V3H8v6H5z', 'fill="#007000" stroke="none"'),
    p('M3 16 15 4') + p('M14 6l5 6h-3v5h-4v-5H9z', 'fill="#f00000" stroke="none"'),
    t('A', 5, 15, 'style="font-size:14px;fill:#000"'),
    t('A', 7, 15, 'style="font-size:13px;fill:#000"') + p('M4 3v6M1 6h6', 'stroke="#000" stroke-width="1.2"'),
    `<rect x="3" y="3" width="14" height="13" fill="#a0a0a0" stroke="#c0c0c0" stroke-width="1.4"/>`,
    p('M4 3l13 13M17 3 4 16', 'stroke="#e00000" stroke-width="1.6"'),
    `<rect x="3" y="10" width="5" height="7" stroke="#a0a0a0"/><circle cx="16" cy="5" r="4" fill="#f0f000" stroke="#c0c040"/>` + p('M6 11l8-5', 'stroke="#a0a0a0"'),
    `<rect x="4" y="1" width="13" height="16" stroke-width="1.2"/>` + p('M7 5h7M7 8h7M7 11h7M7 14h7'),
    `<rect x="2" y="5" width="18" height="8" stroke-width="1.2"/>` + p('M5 5v3M8 5v3M11 5v3M14 5v3M17 5v3'),
    `<rect x="4" y="3" width="15" height="12"/><rect x="7" y="5" width="6" height="7" fill="#208060" stroke="none"/>` + p('M14 6h3M14 9h3', 'stroke="#208060"')
  ];
  document.getElementById('toolGrid').innerHTML =
    icons.map(s => `<svg width="21" height="18" viewBox="0 0 21 18">${s}</svg>`).join('');
}

drawPrice();
drawVol();
drawMini();
drawDates();
drawTools();
```
